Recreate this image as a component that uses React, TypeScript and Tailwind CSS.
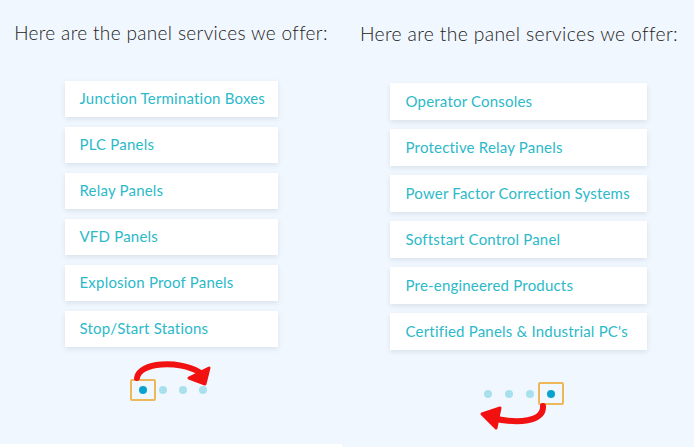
const leftItems = [
  "Junction Termination Boxes",
  "PLC Panels",
  "Relay Panels",
  "VFD Panels",
  "Explosion Proof Panels",
  "Stop/Start Stations",
];

const rightItems = [
  "Operator Consoles",
  "Protective Relay Panels",
  "Power Factor Correction Systems",
  "Softstart Control Panel",
  "Pre-engineered Products",
  "Certified Panels & Industrial PC's",
];

function Dot({ active }: { active?: boolean }) {
  return (
    <span
      className={`block w-[8px] h-[8px] rounded-full ${
        active ? "bg-[#0aa3cf]" : "bg-[#a9e0ee]"
      }`}
    />
  );
}

export default function App() {
  return (
    <div
      className="flex w-[694px] h-[447px] bg-white overflow-hidden"
      style={{ fontFamily: "Lato, 'Open Sans', sans-serif" }}
    >
      {/* left slide */}
      <div className="w-[342px] h-[444px] bg-[#f1f7fe] flex flex-col items-center">
        <h2 className="mt-[19px] text-[19px] font-light text-[#222] tracking-[0.35px]">
          Here are the panel services we offer:
        </h2>
        <div className="mt-[33px] flex flex-col gap-[10px] w-[213px]">
          {leftItems.map((t) => (
            <div
              key={t}
              className="h-[36px] bg-white flex items-center pl-[15px] text-[15px] text-[#2cb9c9] tracking-[0.2px] shadow-[0_2px_5px_rgba(40,70,110,0.12)]"
            >
              {t}
            </div>
          ))}
        </div>
        <div className="relative mt-[39px] flex items-center gap-[12px] ml-[4px]">
          <div className="relative flex items-center justify-center">
            <Dot active />
            <span className="absolute w-[26px] h-[22px] border-2 border-[#ecb85a] rounded-[2px]" />
          </div>
          <Dot />
          <Dot />
          <Dot />
          <svg
            className="absolute left-[-10px] top-[-28px]"
            width="90"
            height="34"
            viewBox="0 0 90 34"
          >
            <path
              d="M8 20 C10 4 50 2 70 14"
              fill="none"
              stroke="#f21111"
              strokeWidth="6"
              strokeLinecap="round"
            />
            <path d="M60 20 L80 10 L76 26 Z" fill="#f21111" stroke="#f21111" strokeWidth="3" strokeLinejoin="round" />
          </svg>
        </div>
      </div>

      {/* right slide */}
      <div className="flex-1 h-[447px] bg-[#f1f7fe] flex flex-col items-center">
        <h2 className="mt-[20px] text-[19.3px] font-light text-[#222] tracking-[0.35px] ml-[2px]">
          Here are the panel services we offer:
        </h2>
        <div className="mt-[34px] flex flex-col gap-[9px] w-[257px]">
          {rightItems.map((t) => (
            <div
              key={t}
              className="h-[37px] bg-white flex items-center pl-[16px] text-[15px] text-[#2cb9c9] tracking-[0.2px] shadow-[0_2px_5px_rgba(40,70,110,0.12)]"
            >
              {t}
            </div>
          ))}
        </div>
        <div className="relative mt-[40px] flex items-center gap-[13px] ml-[2px]">
          <Dot />
          <Dot />
          <Dot />
          <div className="relative flex items-center justify-center">
            <Dot active />
            <span className="absolute w-[26px] h-[23px] border-2 border-[#ecb85a] rounded-[2px]" />
          </div>
          <svg
            className="absolute left-[-6px] top-[10px]"
            width="80"
            height="34"
            viewBox="0 0 80 34"
          >
            <path
              d="M65 6 C66 22 40 24 14 18"
              fill="none"
              stroke="#f21111"
              strokeWidth="6"
              strokeLinecap="round"
            />
            <path d="M22 8 L4 14 L18 28 Z" fill="#f21111" stroke="#f21111" strokeWidth="3" strokeLinejoin="round" />
          </svg>
        </div>
      </div>
    </div>
  );
}
